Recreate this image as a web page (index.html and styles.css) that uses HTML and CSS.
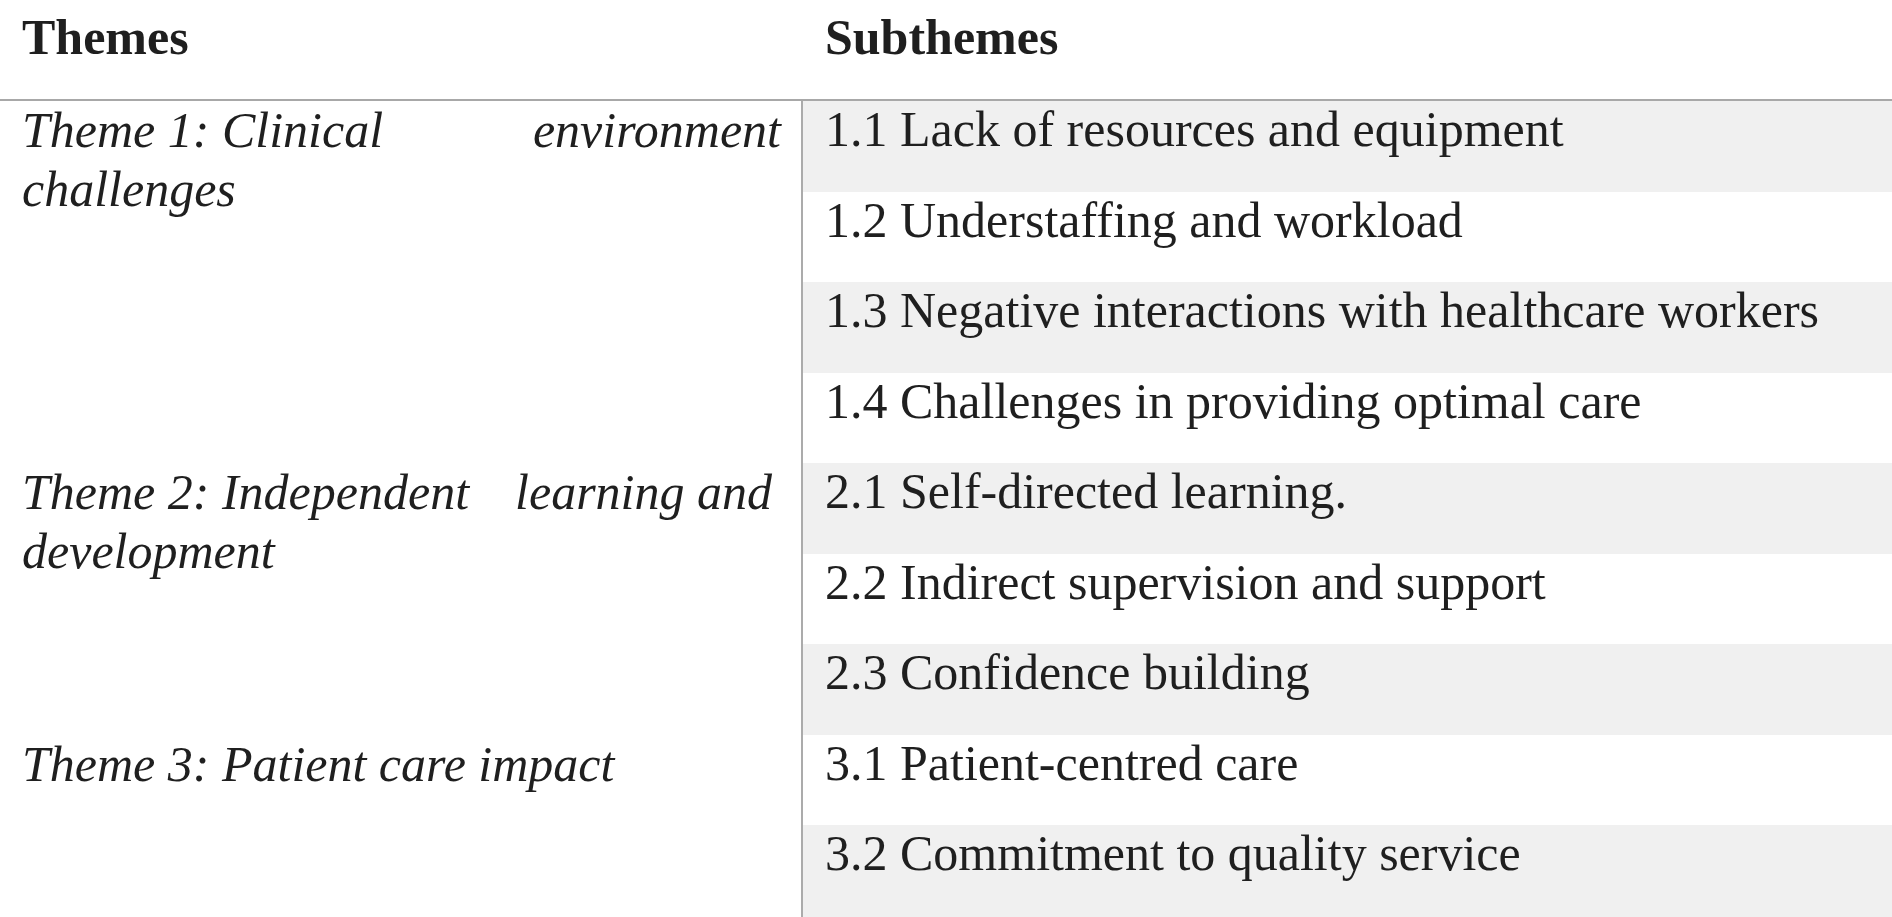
FILE: index.html
```html
<!DOCTYPE html>
<html lang="en">
<head>
<meta charset="utf-8">
<title>Themes and Subthemes</title>
<link rel="stylesheet" href="styles.css">
</head>
<body>
<table class="themes">
  <thead>
    <tr>
      <th class="col-theme">Themes</th>
      <th class="col-sub">Subthemes</th>
    </tr>
  </thead>
  <tbody>
    <tr>
      <td class="theme" rowspan="4"><span class="spread"><span>Theme 1: Clinical</span><span>environment</span></span>challenges</td>
      <td class="sub shade">1.1 Lack of resources and equipment</td>
    </tr>
    <tr><td class="sub">1.2 Understaffing and workload</td></tr>
    <tr><td class="sub shade">1.3 Negative interactions with healthcare workers</td></tr>
    <tr><td class="sub">1.4 Challenges in providing optimal care</td></tr>
    <tr>
      <td class="theme" rowspan="3"><span class="spread spread-short"><span>Theme 2: Independent</span><span>learning and</span></span>development</td>
      <td class="sub shade">2.1 Self-directed learning.</td>
    </tr>
    <tr><td class="sub">2.2 Indirect supervision and support</td></tr>
    <tr><td class="sub shade">2.3 Confidence building</td></tr>
    <tr>
      <td class="theme" rowspan="2">Theme 3: Patient care impact</td>
      <td class="sub">3.1 Patient-centred care</td>
    </tr>
    <tr><td class="sub shade last">3.2 Commitment to quality service</td></tr>
  </tbody>
</table>
</body>
</html>
```

FILE: styles.css
```css
html, body {
  margin: 0;
  padding: 0;
  background: #ffffff;
}

body {
  font-family: "Liberation Serif", "Times New Roman", serif;
  font-size: 50px;
  line-height: 57.5px;
  color: #1f1f1f;
}

.themes {
  width: 1892px;
  border-collapse: collapse;
  table-layout: fixed;
}

.col-theme {
  width: 780px;
}

.themes th {
  text-align: left;
  font-weight: bold;
  vertical-align: top;
  height: 57.5px;
  padding: 9px 0 32.5px 22px;
  border-bottom: 2px solid #a8a8a8;
}

.themes th.col-sub {
  padding-left: 23px;
}

.theme {
  font-style: italic;
  vertical-align: top;
  text-align: left;
  line-height: 59px;
  padding: 0 20px 0 22px;
  border-right: 2px solid #ababab;
}

.spread {
  display: flex;
  justify-content: space-between;
}

.spread-short {
  padding-right: 9px;
}

.sub {
  vertical-align: top;
  height: 57.5px;
  padding: 0 0 33px 22px;
  white-space: nowrap;
}

.shade {
  background: #f0f0f0;
}

.last {
  height: 60px;
}
```
